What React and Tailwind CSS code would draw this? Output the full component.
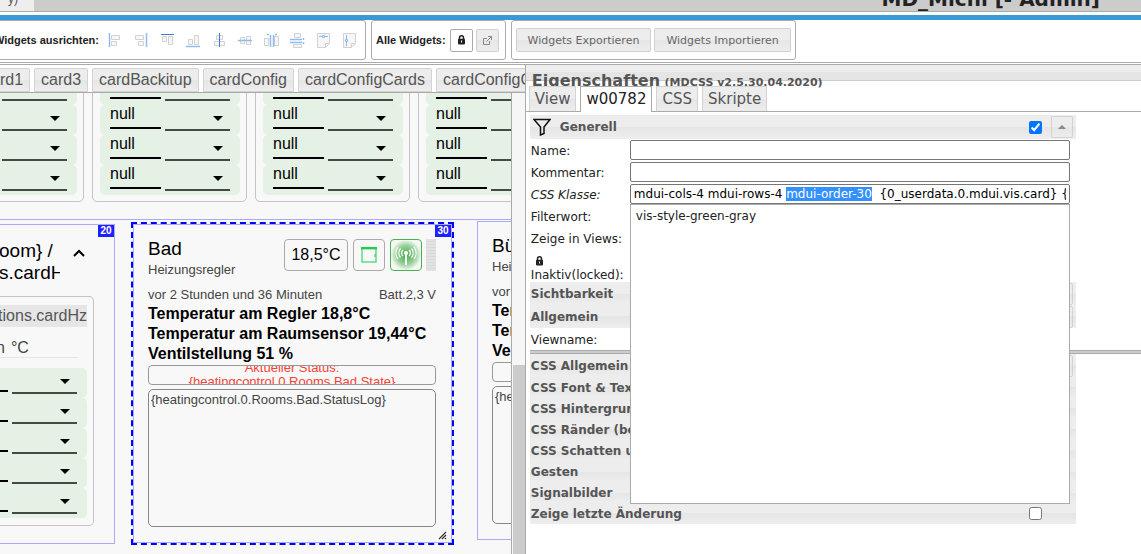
import { useEffect, useRef, useState } from "react";

const viewTabs = ["card1", "card3", "cardBackitup", "cardConfig", "cardConfigCards", "cardConfigCardsNew"];

const propertyTabs = ["View", "w00782", "CSS", "Skripte"];

const cssGroups = [
  "CSS Font & Text",
  "CSS Hintergrund (background)",
  "CSS Ränder (borders)",
  "CSS Schatten und Abstand",
  "Gesten",
  "Signalbilder",
];

const cssClasses =
  "mdui-cols-4 mdui-rows-4 mdui-order-30  {0_userdata.0.mdui.vis.card} {0_userdata.0.mdui.vis.style}";

// Alignment icons: grey shapes with the blue guide line
const alignIcons = [
  {
    name: "Links",
    grey: "M3.5 2.5h8v4h-8zM3.5 8.5h5v4h-5z",
    blue: "M1.5 0v14",
  },
  {
    name: "Rechts",
    grey: "M1.5 2.5h8v4h-8zM4.5 8.5h5v4h-5z",
    blue: "M12.5 0v14",
  },
  {
    name: "Oben",
    grey: "M2.5 3.5h4v5h-4zM8.5 3.5h4v8h-4z",
    blue: "M1 1.5h13",
    dark: true,
  },
  {
    name: "Unten",
    grey: "M2.5 6.5h4v5h-4zM8.5 2.5h4v9h-4z",
    blue: "M0 13.5h14",
  },
  {
    name: "Mitte vertikal",
    grey: "M4.5 2.5h6v4h-6zM2.5 8.5h10v4h-10z",
    blue: "M7.5 0v14",
    dark: true,
  },
  {
    name: "Mitte horizontal",
    grey: "M2.5 4.5h4v6h-4zM8.5 3.5h4v8h-4z",
    blue: "M0 7.5h14",
  },
  {
    name: "Abstand horizontal",
    grey: "M.5 5.5h4v7h-4zM10.5 3.5h4v9h-4z",
    blue: "M6.5 2v12M9.5 2v12M3 1.5h2M11 1.5h2",
  },
  {
    name: "Abstand vertikal",
    grey: "M4.5 .5h6v4h-6zM3.5 11.5h8v3h-8z",
    blue: "M0 6.5h12M0 9.5h12M13.5 5v2M13.5 9v2",
  },
  {
    name: "Gleiche Breite",
    grey: "M1.5 .5h12v10l-4 4h-8zM13.5 10.5h-4v4",
    blue: "M3 3.5h3M9 3.5h3M6.5 2.5h2v2h-2z",
    thin: true,
  },
  {
    name: "Gleiche Höhe",
    grey: "M1.5 .5h12v10l-4 4h-8zM13.5 10.5h-4v4",
    blue: "M4.5 2v4M4.5 9v4M3.5 6.5h2v2h-2z",
    thin: true,
  },
];

function LockIcon() {
  return (
    <svg width="9" height="10" viewBox="0 0 9 10" aria-hidden="true">
      <path d="M2.5 5V2.8a2 2 0 0 1 4 0V5" fill="none" stroke="#222" strokeWidth="1.5" />
      <rect x="1" y="3.8" width="7" height="5.8" rx="1" fill="#222" />
      <path d="M4.5 5.5v2" stroke="#fff" strokeWidth="1" />
    </svg>
  );
}

function Caret() {
  return (
    <svg className="pointer-events-none absolute top-[11px] right-[7px]" width="10" height="5" viewBox="0 0 10 5" aria-hidden="true">
      <path d="M0 0h10L5 5z" fill="#000" />
    </svg>
  );
}

function ValueRow({ value = "null" }) {
  return (
    <div className="flex h-[30px] w-[140px] items-start gap-1 rounded-[5px] bg-[#e6f1e5] px-[10px]">
      <input
        aria-label="Wert"
        defaultValue={value}
        className="h-6 w-[51px] shrink-0 border-b-2 border-black pb-1 text-[16px] outline-none"
      />
      <div className="relative w-[65px] shrink-0">
        <select aria-label="Auswahl" className="block h-[26px] w-full appearance-none border-b-2 border-[#444944] outline-none">
          <option></option>
        </select>
        <Caret />
      </div>
    </div>
  );
}

function ValueCard() {
  return (
    <div className="w-[155px] shrink-0 rounded-[5px] border border-[#c4c4c4] px-[7px] pb-[6px]">
      <ValueRow />
      <ValueRow />
      <ValueRow />
      <ValueRow />
    </div>
  );
}

function Badge({ children }) {
  return (
    <span className="absolute top-0 right-0 h-3 w-4 bg-[#2020ff] text-center text-[10px] leading-3 font-bold text-white">
      {children}
    </span>
  );
}

function RoomWidget({ title, status, log, badge }) {
  return (
    <div className="relative border border-[#aaaaff] pt-3 pr-[15px] pb-[15px] pl-[14px]">
      {badge && <Badge>{badge}</Badge>}
      <div className="flex items-start">
        <div className="flex-1">
          <h3 className="text-[19px] leading-6 text-black">{title}</h3>
          <p className="text-[13px] leading-[18px]">Heizungsregler</p>
        </div>
        <div className="flex pt-[2px]">
          <button className="h-8 w-16 rounded-[4px] border border-[#aaa] text-[16px] text-black">18,5°C</button>
          <button aria-label="Fenster" className="ml-[5px] flex size-8 items-center justify-center rounded-[4px] border border-[#aaa]">
            <svg width="16" height="16" viewBox="0 0 16 16">
              <path d="M1 1h14v14H1z" fill="none" stroke="#5fdc82" strokeWidth="1.5" />
              <path d="M0 1.2h16" stroke="#1fce50" strokeWidth="2.4" />
              <path d="M14 7v3" stroke="#1fce50" strokeWidth="1" />
            </svg>
          </button>
          <button
            aria-label="Funk"
            className="ml-[5px] flex size-8 items-center justify-center rounded-[4px] border border-[#4caf50] bg-[radial-gradient(#55b359_10%,#9ad19c_45%,#f4f8f4_72%)]"
          >
            <svg width="24" height="24" viewBox="0 0 24 24" fill="none" stroke="#fff" strokeWidth="1.2">
              <path d="M12 11v11" strokeWidth="2" />
              <circle cx="12" cy="10" r="1.5" fill="#fff" />
              <path d="M9 7a4 4 0 0 0 0 6M6.500 5.500a7 7 0 0 0 0 9M4 4a10 10 0 0 0 0 12" />
              <path d="M15 7a4 4 0 0 1 0 6M17.500 5.500a7 7 0 0 1 0 9M20 4a10 10 0 0 1 0 12" />
            </svg>
          </button>
          <div className="ml-1 h-8 w-[10px] bg-[repeating-linear-gradient(#e2e2e2_0px,#e2e2e2_2px,#dadada_2px,#dadada_3px)]" />
        </div>
      </div>
      <div className="mt-[7px] flex justify-between text-[13px] leading-[18px] whitespace-nowrap">
        <span>vor 2 Stunden und 36 Minuten</span>
        <span>Batt.2,3 V</span>
      </div>
      <div className="text-[16px] leading-5 font-bold whitespace-nowrap text-black">
        <p>Temperatur am Regler 18,8°C</p>
        <p>Temperatur am Raumsensor 19,44°C</p>
        <p>Ventilstellung 51 %</p>
      </div>
      <div className="mt-px flex h-5 items-center justify-center overflow-hidden rounded-[4px] border border-[#999] text-center text-[13px] leading-[14px] text-[#f44336]">
        <p>
          Aktueller Status:
          <br />
          {status}
        </p>
      </div>
      <div className="mt-1 h-[138px] rounded-[5px] border border-[#888] px-[2px] py-px text-[13px] leading-[18px]">{log}</div>
      {badge && (
        <svg className="absolute right-[4px] bottom-[2px]" width="9" height="9" viewBox="0 0 9 9" stroke="#333" aria-hidden="true">
          <path d="M1 8l7-7M4 8l4-4M7 8l1-1" strokeWidth="1.2" />
        </svg>
      )}
    </div>
  );
}

function ConfigWidget() {
  return (
    <div className="relative mt-[3px] w-[115px] shrink-0 overflow-hidden border border-l-0 border-[#aaaaff] pb-[17px]">
      <Badge>20</Badge>
      <div className="flex pt-[15px]">
        <div className="-ml-px w-[61px] overflow-hidden text-[19px] leading-[22px] whitespace-nowrap text-black">
          <p>oom} /</p>
          <p>s.cardHz</p>
        </div>
        <button aria-label="Einklappen" className="mt-[7px] ml-3 h-3">
          <svg width="14" height="10" viewBox="0 0 14 10" fill="none" stroke="#000" strokeWidth="2">
            <path d="M2 8l5-5 5 5" />
          </svg>
        </button>
      </div>
      <div className="mt-3 w-[94px] rounded-r-[5px] border border-l-0 border-[#c4c4c4] pt-2 pr-[6px] pb-[7px] text-[16px]">
        <div className="flex h-[22px] items-center justify-end overflow-hidden bg-[#e6e6e6] text-[#555]">tions.cardHz</div>
        <div className="mt-[11px] mr-[9px] flex h-5 items-center gap-[6px] border-b border-[#e6e6e6]">
          <span className="-ml-1">n</span>
          <span>°C</span>
        </div>
        <div className="mt-[10px] flex flex-col items-end overflow-hidden">
          <ValueRow value="" />
          <ValueRow value="" />
          <ValueRow value="" />
          <ValueRow value="" />
          <ValueRow value="" />
        </div>
      </div>
    </div>
  );
}

function Toolbar() {
  return (
    <div className="flex h-[43px] items-start gap-[5px] overflow-hidden border-b border-[#aaa] text-[11px]">
      <div className="-ml-[10px] flex h-10 w-[376px] shrink-0 items-center rounded-[3px] border border-[#aaa]">
        <span className="w-[108px] text-right font-bold text-[#222]">Widgets ausrichten:</span>
        <div className="ml-[9px] flex gap-[11px]">
          {alignIcons.map((icon) => (
            <button key={icon.name} aria-label={icon.name} title={icon.name}>
              <svg width="15" height="15" viewBox="0 0 15 15" fill="none">
                <path d={icon.grey} fill="#f6f6f6" stroke="#d2d2d2" />
                <path
                  d={icon.blue}
                  stroke={icon.dark ? "#3f7ce0" : "#8dbcf5"}
                  strokeWidth={icon.dark || icon.thin ? 1 : 1.5}
                />
              </svg>
            </button>
          ))}
        </div>
      </div>
      <div className="flex h-10 shrink-0 items-center rounded-[3px] border border-[#aaa] pr-[6px] pl-1">
        <span className="mr-1 font-bold text-[#222]">Alle Widgets:</span>
        <button aria-label="Sperren" className="flex size-[23px] items-center justify-center rounded-[2px] border border-[#aaa] bg-white">
          <LockIcon />
        </button>
        <button
          aria-label="Öffnen"
          className="ml-[3px] flex size-[23px] items-center justify-center rounded-[2px] border border-[#d0d0d0] bg-[linear-gradient(#ededed_0%,#ededed_50%,#e6e6e6_50%,#ededed_100%)]"
        >
          <svg width="9" height="9" viewBox="0 0 9 9" fill="none" stroke="#888">
            <path d="M4 2.500H.5v6h6V5M5 .5h3.500V4M8.500 .5L3.500 5.500" />
          </svg>
        </button>
      </div>
      <div className="flex h-10 shrink-0 items-center gap-[3px] rounded-[3px] border border-[#aaa] px-1 font-['DejaVu_Sans',sans-serif] text-[#666]">
        <button className="h-6 rounded-[2px] border border-[#d0d0d0] bg-[linear-gradient(#ededed_0%,#ededed_50%,#e6e6e6_50%,#ededed_100%)] px-[11px] pt-[2px]">
          Widgets Exportieren
        </button>
        <button className="h-6 rounded-[2px] border border-[#d0d0d0] bg-[linear-gradient(#ededed_0%,#ededed_50%,#e6e6e6_50%,#ededed_100%)] px-[11px] pt-[2px]">
          Widgets Importieren
        </button>
      </div>
    </div>
  );
}

function Canvas() {
  return (
    <div className="flex w-[46%] shrink-0 flex-col">
      <nav className="flex h-7 items-start gap-1 overflow-hidden border-b border-[#aaa] bg-white pt-[3px]">
        {viewTabs.map((tab, index) => (
          <button
            key={tab}
            className={`h-6 shrink-0 rounded-t-[2px] border border-[#d3d3d3] bg-[linear-gradient(#ededed_0%,#ededed_50%,#e6e6e6_50%,#ededed_100%)] px-[6px] text-[16px] leading-[22px] text-[#555] ${
              index === 0 ? "-ml-6" : ""
            }`}
          >
            {tab}
          </button>
        ))}
      </nav>
      <div className="flex min-h-0 flex-1">
        <div className="min-w-0 flex-1 overflow-hidden bg-[#f8f8f8] text-[#444]">
          <div className="-mt-[19px] -ml-[71px] flex gap-2 text-black">
            <ValueCard />
            <ValueCard />
            <ValueCard />
            <ValueCard />
          </div>
          <div className="mt-[17px] flex items-start border-t border-[#aaaaff] pt-px">
            <ConfigWidget />
            <div className="mt-px ml-4 w-[323px] shrink-0 border-2 border-dashed border-[#0000ff]">
              <RoomWidget
                title="Bad"
                badge="30"
                status="{heatingcontrol.0.Rooms.Bad.State}"
                log="{heatingcontrol.0.Rooms.Bad.StatusLog}"
              />
            </div>
            <div className="ml-[23px] w-[319px] shrink-0">
              <RoomWidget
                title="Büro"
                status="{heatingcontrol.0.Rooms.Buero.State}"
                log="{heatingcontrol.0.Rooms.Buero.StatusLog}"
              />
            </div>
          </div>
        </div>
        <div className="flex w-[14px] shrink-0 flex-col justify-end border-l border-[#aaa] bg-[#f6f6f6] pl-px">
          <div className="h-[41%] bg-[#cbcbcb]" />
        </div>
      </div>
    </div>
  );
}

function GroupHeader({ title, collapsible }) {
  return (
    <div
      className={`flex items-center justify-between bg-[linear-gradient(#ededed_0%,#ededed_50%,#e5e5e5_50%,#eeeeee_100%)] pr-[3px] pl-px font-bold text-[#555] ${
        collapsible ? "h-[23px]" : "h-[21px]"
      }`}
    >
      <span>{title}</span>
      {collapsible && <button aria-label={title} className="size-[22px] rounded-[2px] border border-[#d3d3d3]" />}
    </div>
  );
}

function Field({ id, label, children }) {
  return (
    <div className="relative flex h-[22px] items-center pr-[6px] pl-px">
      <label htmlFor={id} className="w-[99px] shrink-0 pt-[2px]">
        {label}
      </label>
      {children || <input id={id} className="h-5 min-w-0 flex-1 rounded-[2px] border border-[#767676] bg-white px-1" />}
    </div>
  );
}

function Properties() {
  const [activeTab, setActiveTab] = useState("w00782");
  const [classes, setClasses] = useState(cssClasses);
  const classInput = useRef(null);

  // Select the order class, so that it can be overwritten right away
  useEffect(() => {
    const input = classInput.current;
    const start = cssClasses.indexOf("mdui-order-30");
    input.setSelectionRange(0, 0);
    input.focus();
    input.setSelectionRange(start, start + "mdui-order-30".length, "backward");
    input.scrollLeft = 0;
    requestAnimationFrame(() => {
      input.scrollLeft = 0;
    });
  }, []);

  return (
    <div className="min-w-0 flex-1 border-l border-[#aaa] bg-white font-['DejaVu_Sans',sans-serif] text-[12px] text-[#222]">
      <h2 className="h-4 border-b border-[#ccc] bg-[linear-gradient(#ededed_0%,#ededed_50%,#e5e5e5_50%,#e5e5e5_100%)] pt-[6px] pl-[6px] text-[16px] leading-5 font-bold whitespace-nowrap text-[#555]">
        Eigenschaften <span className="-ml-px text-[11px]">(MDCSS v2.5.30.04.2020)</span>
      </h2>
      <div className="relative flex h-[31px] items-end gap-1 border-b border-[#aaa] pl-[3px] text-[15px]">
        {propertyTabs.map((tab) => (
          <button
            key={tab}
            onClick={() => setActiveTab(tab)}
            className={
              tab === activeTab
                ? "-mb-px h-[26px] border border-b-0 border-[#aaa] bg-white px-[5px] text-[#222]"
                : "h-[25px] border border-b-0 border-[#d3d3d3] bg-[linear-gradient(#ededed_0%,#ededed_50%,#e6e6e6_50%,#ededed_100%)] px-[5px] text-[#555]"
            }
          >
            {tab}
          </button>
        ))}
      </div>

      <div className="mt-[3px] mr-[65px] ml-1">
        <div className="flex h-6 items-center bg-[linear-gradient(#ededed_0%,#ededed_50%,#e5e5e5_50%,#eeeeee_100%)] pr-[3px] pl-[3px] font-bold text-[#555]">
          <svg width="18" height="18" viewBox="0 0 18 18" fill="none" stroke="#111" strokeWidth="1.5" aria-hidden="true">
            <path d="M1 1.500h16L11 9v6.500L7.500 17V9z" />
          </svg>
          <label htmlFor="generell" className="ml-[9px] flex-1">
            Generell
          </label>
          <input id="generell" type="checkbox" defaultChecked className="mr-[9px] size-[13px]" />
          <button aria-label="Zuklappen" className="flex size-[22px] items-center justify-center rounded-[2px] border border-[#d3d3d3]">
            <svg width="8" height="4" viewBox="0 0 8 4">
              <path d="M0 4h8L4 0z" fill="#888" />
            </svg>
          </button>
        </div>

        <Field id="name" label="Name:" />
        <Field id="kommentar" label="Kommentar:" />
        <Field id="klasse" label={<i>CSS Klasse:</i>}>
          <input
            id="klasse"
            ref={classInput}
            value={classes}
            onChange={(e) => setClasses(e.target.value)}
            className="h-5 min-w-0 flex-1 rounded-[2px] border border-[#767676] bg-white px-[3px] text-black outline-none selection:bg-[#3390ff] selection:text-white"
          />
          <ul className="absolute top-[21px] right-[6px] left-[100px] z-10 h-[300px] border border-[#aaa] bg-white px-[5px] py-[3px]">
            <li className="leading-4">vis-style-green-gray</li>
          </ul>
        </Field>
        <Field id="filterwort" label="Filterwort:" />
        <Field id="views" label="Zeige in Views:" />
        <div className="h-[33px] pl-px">
          <div className="flex h-[18px] items-end pb-px pl-1">
            <LockIcon />
          </div>
          <label htmlFor="locked" className="flex items-center leading-[17px]">
            <span className="w-[99px]">Inaktiv(locked):</span>
            <input id="locked" type="checkbox" className="size-[13px]" />
          </label>
        </div>
        <GroupHeader title="Sichtbarkeit" collapsible />
        <GroupHeader title="Allgemein" collapsible />
        <Field id="viewname" label="Viewname:" />
      </div>

      <div className="ml-1 h-1 border-y border-[#aaa] bg-[#ccc]" />

      <div className="mr-[65px] ml-1">
        <GroupHeader title="CSS Allgemein" collapsible />
        {cssGroups.map((group) => (
          <GroupHeader key={group} title={group} />
        ))}
        <div className="flex h-[21px] items-center justify-between bg-[linear-gradient(#ededed_0%,#ededed_50%,#e5e5e5_50%,#eeeeee_100%)] pr-[34px] pl-px font-bold text-[#555]">
          <label htmlFor="letzte">Zeige letzte Änderung</label>
          <input id="letzte" type="checkbox" className="size-[13px]" />
        </div>
      </div>
    </div>
  );
}

function App() {
  return (
    <div className="flex h-screen flex-col overflow-hidden bg-white font-['Liberation_Sans',Arial,sans-serif]">
      <header className="flex h-3 shrink-0 items-end justify-between overflow-hidden border-b border-[#aaa] bg-[#ccc]">
        <span className="h-3 w-[34px] bg-[#eee] pl-2 text-[12px] leading-[0px] text-[#555]">y)</span>
        <h1 className="mr-[41px] font-['DejaVu_Sans',sans-serif] text-[20px] leading-6 font-bold text-[#222]">MD_Michi [- Admin]</h1>
      </header>
      <div className="mt-[3px] h-[5px] shrink-0 bg-[#3998d6]" />
      <div className="shrink-0">
        <Toolbar />
      </div>
      <main className="mt-px flex min-h-0 flex-1 border-t border-[#aaa]">
        <Canvas />
        <Properties />
      </main>
    </div>
  );
}

export default App;
